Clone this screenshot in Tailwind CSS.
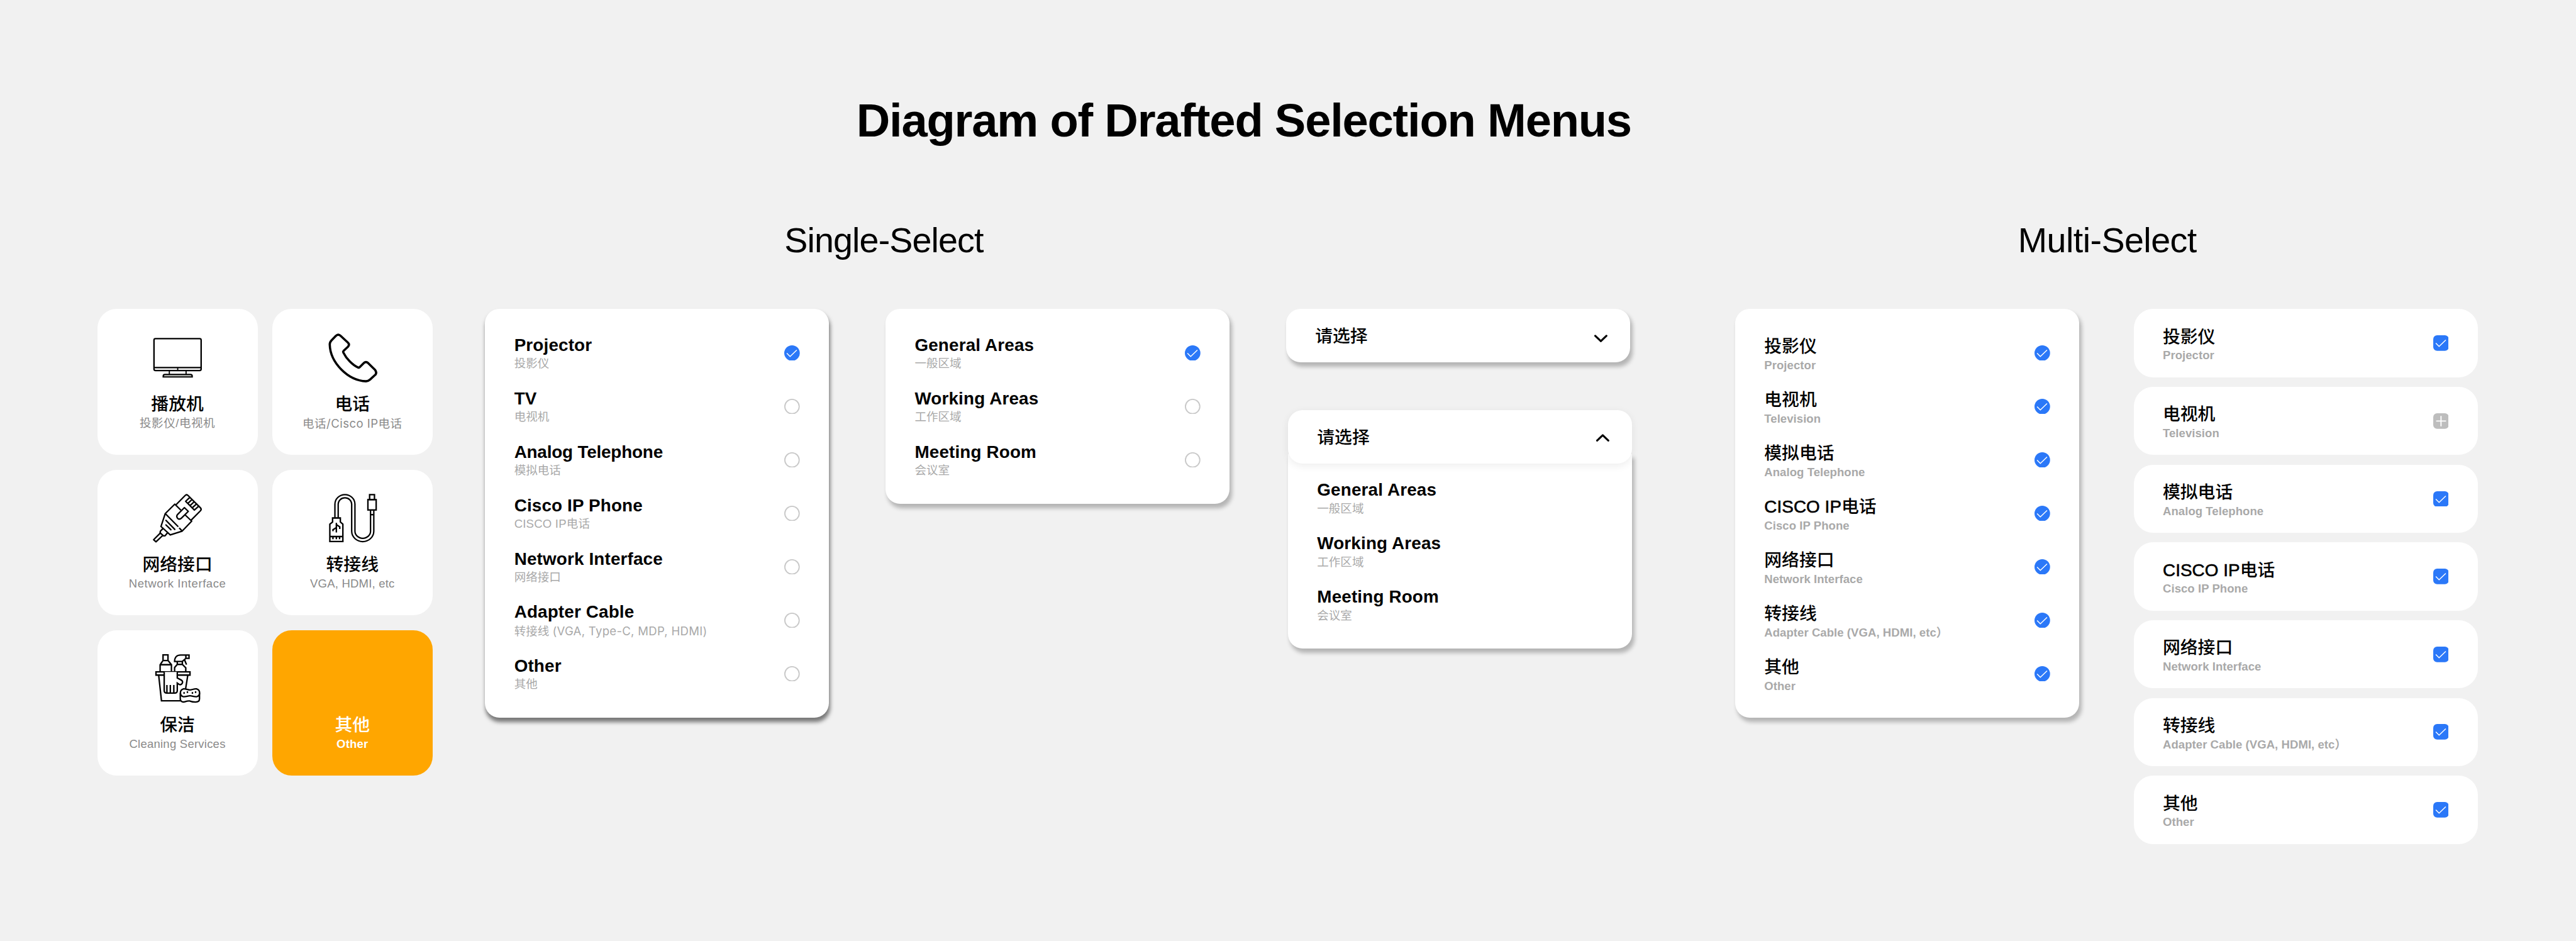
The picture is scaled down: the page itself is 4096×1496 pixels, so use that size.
<!DOCTYPE html>
<html lang="zh-CN" class="text-[12.3653px]">
<head>
<meta charset="utf-8">
<title>Diagram of Drafted Selection Menus</title>
<script src="https://cdn.jsdelivr.net/npm/@tailwindcss/browser@4"></script>
</head>
<body class="bg-[#f1f1f1] text-black w-[4096px] h-[1496px] overflow-hidden font-['Liberation_Sans','Noto_Sans_CJK_SC',sans-serif]">
<header class="pt-50.25">
  <h1 class="pl-440.5 text-8xl/none font-bold whitespace-nowrap tracking-[-0.0165em]"><span>Diagram of Drafted Selection Menus</span></h1>
</header>
<div class="flex mt-40.5 text-7xl/none whitespace-nowrap h-18">
  <h2 class="ml-403.5 w-634.5 tracking-[-0.016em]"><span>Single-Select</span></h2>
  <h2 class="tracking-[-0.010em]"><span>Multi-Select</span></h2>
</div>

<main class="flex items-start mt-26.25 pl-50">
  <!-- Service tiles -->
  <section class="grid grid-cols-2 gap-7.5 w-172.5 shrink-0">
    <div class="h-75 rounded-[2.5rem] bg-white pt-12.5 flex flex-col items-center">
      <svg class="size-25 overflow-visible" viewBox="0 0 100 100" fill="none" stroke="#000" stroke-width="3">
        <rect x="2.4" y="10.8" width="97" height="65.6" rx="3"/>
        <path d="M2.4 70.3H99.4"/><path d="M51.2 70v6M34 77v7M68.4 77v7" stroke-width="2.4"/>
        <path d="M21.4 89.6v-1.6q0-3.4 3.4-3.4h52.8q3.4 0 3.4 3.4v1.6z" fill="#d9ddd6" stroke-width="2.8"/>
      </svg>
      <div class="mt-5.75 text-4xl/[2.875rem] font-medium">播放机</div>
      <div class="text-2xl/8 text-[#8a8a8a] tracking-[0.03em]"><span>投影仪/电视机</span></div>
    </div>
    <div class="h-75 rounded-[2.5rem] bg-white pt-12.5 flex flex-col items-center">
      <svg class="size-25 overflow-visible" viewBox="0 0 100 100" fill="none" stroke="#000" stroke-width="4.6" stroke-linejoin="round">
        <path d="M15.5 5.2Q20.5.2 25.5 5.2L40.5 19Q44.5 23 40.5 27.5L31.5 36Q30 37.5 31 39.5C37 52 50 65 61 70Q63 71 64.5 69.5L73 61Q77.5 57 82 61L96.5 75.5Q100 80 97.5 84.5L86 95Q82 98.5 77.6 98.5C40 97 4 60 3 23Q3 18 6.500 14.500Z"/>
      </svg>
      <div class="mt-5.75 text-4xl/[2.875rem] font-medium">电话</div>
      <div class="text-2xl/8 text-[#8a8a8a] tracking-[0.025em] font-['Inter','Noto_Sans_CJK_SC',sans-serif]"><span>电话/Cisco IP电话</span></div>
    </div>
    <div class="h-75 rounded-[2.5rem] bg-white pt-12.5 flex flex-col items-center">
      <svg class="size-25 overflow-visible" viewBox="0 0 100 100" fill="none" stroke="#000" stroke-width="3" stroke-linejoin="round" stroke-linecap="round">
        <path d="M48 22.300L66.500 3.500Q69.500.500 72.500 3.500L98 29Q101 32 98 35L79.500 53.500"/>
        <path d="M76 7.500L67.500 15.500L85.500 33.500L94.500 25.500M72 20L80.500 12M76.500 24.500L85 16.500M81 29L90 21"/>
        <path d="M57 33L45.200 21.300L25.600 40.700L16.800 67.300L35.900 84.700L60.500 76.700L80 56.300L67 44M25.600 40.700L51.500 67M55 71L60.500 76.700M27 54.700L45.200 73.300M27 64L37.200 74"/>
        <path d="M65 28.500L73 36.200L59 50Q55 54 51 50.500Q47.500 46.500 51 42.500Z"/>
        <path d="M21 71.300L15.500 77Q14.500 80 16 81.500L22 86.500Q24.500 87 26 85.500L30.500 80"/>
        <path d="M15.500 80.700L1.700 94.500L6.500 98.700L20.500 85.700"/>
      </svg>
      <div class="mt-5.75 text-4xl/[2.875rem] font-medium">网络接口</div>
      <div class="text-2xl/8 text-[#8a8a8a] tracking-[0.03em]"><span>Network Interface</span></div>
    </div>
    <div class="h-75 rounded-[2.5rem] bg-white pt-12.5 flex flex-col items-center">
      <svg class="size-25 overflow-visible" viewBox="0 0 100 100" fill="none" stroke="#000" stroke-width="3">
        <path d="M17 49V21.500A17.250 16.500 0 0 1 51.500 21.500V77A19.400 18 0 0 0 90.300 77V34" stroke-width="9.600"/>
        <path d="M17 49V21.500A17.250 16.500 0 0 1 51.500 21.500V77A19.400 18 0 0 0 90.300 77V34" stroke="#fff" stroke-width="3.800"/>
        <path d="M87 43H94"/>
        <rect x="81.500" y="12" width="17" height="21.300" fill="#fff"/><rect x="85" y="1.800" width="10" height="10.200"/>
        <path d="M8.800 49.800H24.800V58L30 62.500V98.200H3.200V62.500L8.800 58ZM3.200 88H30" fill="#fff"/>
        <path d="M9.600 88v5.500M16.600 88v5.500M23.200 88v5.500M16.600 60v19.700M9.600 77V74L16.600 69.500M23.600 72.500V68L16.600 63.500"/>
      </svg>
      <div class="mt-5.75 text-4xl/[2.875rem] font-medium">转接线</div>
      <div class="text-2xl/8 text-[#8a8a8a] tracking-[0.01em]"><span>VGA, HDMI, etc</span></div>
    </div>
    <div class="h-75 rounded-[2.5rem] bg-white pt-12.5 flex flex-col items-center">
      <svg class="size-25 overflow-visible" viewBox="0 0 100 100" fill="none" stroke="#000" stroke-width="3">
        <path d="M21 1.500H31.200V13H21ZM21 13L15 21.700V36M31.200 13L38.300 21.700V36M15 21.700H38.300"/>
        <path d="M44.800 15C44.800 6 50 1.700 57 1.700H74.500V8.500H68L60.500 15ZM68 1.700V8.500M65 11L69.300 21.500M50.300 15V21L44.800 27.500V36M60.800 15V21L67.800 28V36M50.300 21H60.800"/>
        <path d="M6.500 36.500H76.500V43H6.500ZM12 43L17.800 96H57M72 43L67.500 71"/>
        <path d="M23.400 36.500V75Q23.400 80 29 80H45Q50.300 80 50.300 75V59.500L54 62Q58 64 60.500 60Q62.500 56 59 53.500L50.300 49V36.500" fill="#fff"/>
        <path d="M29 63.300V79M36 63.300V79M43.200 63.300V79"/>
        <path d="M56.500 80V92C56.500 98 62 99.500 67 97.500C73 95.500 74 96 76.500 96.500C80 98 84 98.500 88 98.500C93 98.500 96 96 96 92V80" fill="#fff"/>
        <path d="M62.500 71.500C68 70.500 71 74 76.500 73.500C81 73.500 85 70.500 90.500 71.500C98 73.500 98 85 91 87.300C86 88.500 81 85.500 76.500 85.500C72 85.500 67 88.500 62 87.300C55 85 55 73.500 62.500 71.500Z" fill="#fff"/>
        <path d="M64.300 78v3.500M71.200 76.500v3.500M81.500 78v3.500M88 76.500v3.500"/>
      </svg>
      <div class="mt-5.75 text-4xl/[2.875rem] font-medium">保洁</div>
      <div class="text-2xl/8 text-[#8a8a8a] tracking-[0.012em]"><span>Cleaning Services</span></div>
    </div>
    <div class="h-75 rounded-[2.5rem] bg-[#ffa600] text-white pt-43.25 flex flex-col items-center">
      <div class="text-4xl/[2.875rem] font-medium">其他</div>
      <div class="text-2xl/8 font-bold tracking-[0.01em]"><span>Other</span></div>
    </div>
  </section>

  <section id="single" class="ml-27 w-177 shrink-0 rounded-[1.875rem] bg-white px-15 py-8.75 shadow-[0.125rem_0.5rem_0.5rem_rgba(0,0,0,0.5)]"></section>
  <section id="areas" class="ml-29 w-177 shrink-0 rounded-[1.875rem] bg-white px-15 py-8.75 shadow-[0.25rem_0.5rem_0.5rem_rgba(0,0,0,0.25)]"></section>

  <!-- Dropdowns: closed and open -->
  <section class="ml-29 w-178 shrink-0">
    <div class="w-177 h-27.5 rounded-[1.875rem] bg-white pl-15 pr-11.75 flex items-center justify-between shadow-[0.25rem_0.5rem_0.5rem_rgba(0,0,0,0.25)]">
      <span class="pt-0.5 text-4xl/[2.875rem] font-medium">请选择</span>
      <svg class="w-6.75 h-4 mt-2.5 overflow-visible" viewBox="0 0 27 16" fill="none" stroke="#000" stroke-width="4" stroke-linecap="round" stroke-linejoin="round"><path d="M2 2.500L13.500 13.500L25 2.500"/></svg>
    </div>
    <div class="ml-1 mt-24.5 w-177">
      <div class="relative z-10 h-27.5 rounded-[1.875rem] bg-white pl-15 pr-11.75 flex items-center justify-between shadow-[0_0.25rem_1rem_rgba(0,0,0,0.07)]">
        <span class="pt-0.5 text-4xl/[2.875rem] font-medium">请选择</span>
        <svg class="w-6.75 h-4 mt-1 overflow-visible" viewBox="0 0 27 16" fill="none" stroke="#000" stroke-width="4" stroke-linecap="round" stroke-linejoin="round"><path d="M2 13.500L13.500 2.500L25 13.500"/></svg>
      </div>
      <div id="open" class="-mt-5 rounded-b-[1.875rem] bg-white px-15 py-8.75 shadow-[0.25rem_0.5rem_0.5rem_rgba(0,0,0,0.25)]"></div>
    </div>
  </section>

  <section id="multi" class="ml-53 w-177 shrink-0 rounded-[1.875rem] bg-white px-15 py-8.75 shadow-[0.25rem_0.5rem_0.5rem_rgba(0,0,0,0.25)]"></section>
  <section id="cards" class="ml-28 w-177 shrink-0 flex flex-col gap-5"></section>
</main>

<script>
const tick = '<path d="M5.300 16.300L12 23L25.800 9.800" fill="none" stroke="#fff" stroke-width="1.900"/>';
const marks = {
  on: `<svg class="size-8" viewBox="0 0 32 32"><circle cx="16" cy="16" r="16" fill="#2b78f8"/>${tick}</svg>`,
  off: '<svg class="size-8" viewBox="0 0 32 32"><circle cx="16" cy="16" r="14.800" fill="none" stroke="#c9c9c9" stroke-width="2.400"/></svg>',
  box: `<svg class="size-8" viewBox="0 0 32 32"><rect width="32" height="32" rx="8" fill="#2b78f8"/>${tick}</svg>`,
  plus: '<svg class="size-8" viewBox="0 0 32 32"><rect width="32" height="32" rx="8" fill="#bdbdbd"/><path d="M7 16H25.500M16 6.500V26" fill="none" stroke="#fff" stroke-width="2.400" stroke-linecap="round"/></svg>',
  none: ''
};
const enRow = ([t, s, m]) => `<div class="h-27.5 flex items-center justify-between whitespace-nowrap"><div>
  <div class="text-4xl/[2.875rem] font-bold tracking-[0.006em]"><span>${t}</span></div>
  <div class="text-2xl/8 text-[#a9a9a9]"><span>${s}</span></div></div>${marks[m]}</div>`;
const zhText = (t, s) => `<div class="pt-1.5">
  <div class="text-4xl/[2.875rem] font-medium"><span>${t}</span></div>
  <div class="text-2xl/8 font-bold text-[#a9a9a9] tracking-[0.003em]"><span>${s}</span></div></div>`;
const put = (id, html) => { document.getElementById(id).innerHTML = html; };

put('single', [
  ['Projector', '投影仪', 'on'], ['TV', '电视机', 'off'], ['<span class="tracking-[-0.006em]">Analog Telephone</span>', '模拟电话', 'off'],
  ['Cisco IP Phone', '<span class="tracking-[0.012em]">CISCO IP电话</span>', 'off'], ['Network Interface', '网络接口', 'off'],
  ['Adapter Cable', '转接线 <span class="font-[Inter] tracking-[0.016em]">(VGA, Type-C, MDP, HDMI)</span>', 'off'], ['Other', '其他', 'off']
].map(enRow).join(''));

const areas = [['General Areas', '一般区域'], ['Working Areas', '工作区域'], ['Meeting Room', '会议室']];
put('areas', areas.map((a, i) => enRow([...a, i ? 'off' : 'on'])).join(''));
put('open', areas.map(a => enRow([...a, 'none'])).join(''));

const cisco = '<span class="[-webkit-text-stroke:0.05rem_#000] tracking-[0.003em]">CISCO IP</span>电话';
const items = [['投影仪', 'Projector'], ['电视机', 'Television'], ['模拟电话', 'Analog Telephone'], [cisco, 'Cisco IP Phone'],
  ['网络接口', 'Network Interface'], ['转接线', 'Adapter Cable (VGA, HDMI, etc）'], ['其他', 'Other']];
put('multi', items.map(([t, s]) => `<div class="h-27.5 flex items-center justify-between whitespace-nowrap">${zhText(t, s)}${marks.on}</div>`).join(''));
put('cards', items.map(([t, s], i) => `<div class="h-35 rounded-[2.5rem] bg-white px-15 flex items-center justify-between whitespace-nowrap">${zhText(t, s)}${marks[i === 1 ? 'plus' : 'box']}</div>`).join(''));
</script>
</body>
</html>
